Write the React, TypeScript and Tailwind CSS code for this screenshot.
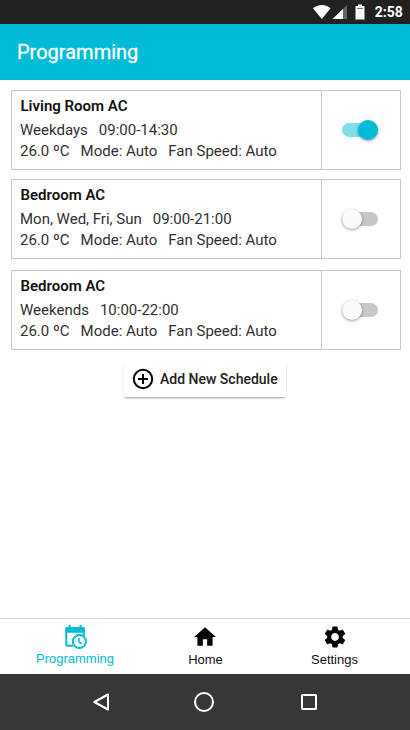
import { MdHome, MdSettings } from "react-icons/md";

type Schedule = {
  name: string;
  days: string;
  hours: string;
  enabled: boolean;
  spacing: string;
};

const schedules: Schedule[] = [
  { name: "Living Room AC", days: "Weekdays", hours: "09:00-14:30", enabled: true, spacing: "mt-[10px]" },
  { name: "Bedroom AC", days: "Mon, Wed, Fri, Sun", hours: "09:00-21:00", enabled: false, spacing: "mt-[9px]" },
  { name: "Bedroom AC", days: "Weekends", hours: "10:00-22:00", enabled: false, spacing: "mt-[11px]" },
];

function StatusBar() {
  return (
    <div className="flex h-6 items-center bg-[#212121] pl-[313px] text-white">
      <svg width="92" height="24" viewBox="0 0 92 24" className="shrink-0">
        <path d="M0 8.200C2.300 6.300 5.200 5 8.800 5s6.500 1.300 8.800 3.200L8.800 19z" fill="#fff" />
        <path d="M34 5V19H19.500z" fill="#fff" fillOpacity=".3" />
        <path d="M30 9V19H19.500z" fill="#fff" />
        <path d="M45 4.500h4v1.500h2.500v13.600h-9V6H45z" fill="#fff" />
        <path d="M44 8h6v1h-6z" fill="#777" />
        <text x="61.800" y="17" fill="#fff" fontSize="14" fontWeight="700" fontFamily="Roboto, sans-serif">2:58</text>
      </svg>
    </div>
  );
}

function Toggle({ on }: { on: boolean }) {
  return (
    <span
      className={`flex h-[14px] w-9 items-center rounded-full ${on ? "justify-end bg-[#80deea]" : "justify-start bg-[#c7c7c7]"}`}
    >
      <span
        className={`size-5 shrink-0 rounded-full shadow-[0_1px_3px_rgba(0,0,0,0.4)] ${on ? "bg-[#00bcd7]" : "bg-[#fafafa]"}`}
      />
    </span>
  );
}

function ScheduleCard({ schedule }: { schedule: Schedule }) {
  return (
    <section className={`ml-[11px] flex h-20 w-[390px] border border-[#c8c8c8] ${schedule.spacing}`}>
      <div className="w-[310px] border-r border-[#c8c8c8] pl-2 pt-[5px] text-[15px] text-[#303030]">
        <h2 className="pl-[0.5px] text-[15px] leading-5 font-semibold text-[#111]">{schedule.name}</h2>
        <p className="mt-1 flex h-5 gap-[11px] leading-5 whitespace-nowrap">
          <span>{schedule.days}</span>
          <span>{schedule.hours}</span>
        </p>
        <p className="mt-px flex h-5 gap-[11px] leading-5 whitespace-nowrap">
          <span>26.0 ºC</span>
          <span>Mode: Auto</span>
          <span>Fan Speed: Auto</span>
        </p>
      </div>
      <div className="flex flex-1 items-center justify-center pr-[2px]">
        <Toggle on={schedule.enabled} />
      </div>
    </section>
  );
}

function AddButton() {
  return (
    <button className="mx-auto mt-[11px] flex h-9 w-[162px] items-center rounded-[2px] bg-white pl-2 text-sm font-medium whitespace-nowrap text-[#212121] shadow-[0_2px_2px_-1px_rgba(0,0,0,0.3),0_1px_2px_rgba(0,0,0,0.12)]">
      <svg width="22" height="22" viewBox="0 0 22 22" fill="none" stroke="#000" strokeWidth="2" className="mr-[6px] shrink-0">
        <circle cx="11" cy="11" r="9.200" />
        <path d="M11 6v10M6 11h10" />
      </svg>
      Add New Schedule
    </button>
  );
}

function CalendarClock() {
  return (
    <svg width="26" height="26" viewBox="-1 0 26 26" fill="none" stroke="#00bcd4" className="ml-[2px]">
      <path d="M9 21.700H3.300A1 1 0 0 1 2.300 20.700V5M19.800 5V12" strokeWidth="2" />
      <path d="M1.300 4.200Q1.300 3 2.500 3H19.600Q20.800 3 20.800 4.200V8.700H1.300z" fill="#00bcd4" stroke="none" />
      <path d="M5.700 1v3M16.600 1v3" strokeWidth="2" />
      <circle cx="15.400" cy="17.500" r="6.500" strokeWidth="2" fill="#fff" />
      <path d="M15 14V18L18 19.800" strokeWidth="1.500" />
    </svg>
  );
}

function BottomTabs() {
  return (
    <nav className="flex h-14 border-t border-[#e0e0e0] bg-white px-[10px] font-['Liberation_Sans',Arial,sans-serif] text-[13px] text-[#111]">
      <div className="flex w-[130px] flex-col items-center pt-[5px] text-[#00bcd4]">
        <CalendarClock />
        <span className="mt-px leading-4">Programming</span>
      </div>
      <div className="flex w-[130px] flex-col items-center pt-[5px]">
        <MdHome size={26} color="#000" />
        <span className="mt-[2px] pl-px leading-4">Home</span>
      </div>
      <div className="flex w-[130px] flex-col items-center pt-[5px]">
        <MdSettings size={26} color="#000" />
        <span className="mt-[2px] pr-px leading-4">Settings</span>
      </div>
    </nav>
  );
}

function SystemBar() {
  return (
    <div className="h-14 bg-[#373737]">
      <svg width="410" height="56" viewBox="0 0 410 56" fill="none" stroke="#fff" strokeWidth="2">
        <path d="M108 20.500V35.500L94.300 28z" strokeLinejoin="round" />
        <circle cx="204" cy="28" r="9" />
        <rect x="302" y="21" width="14" height="14" rx=".5" />
      </svg>
    </div>
  );
}

export default function App() {
  return (
    <div className="flex h-[730px] w-[410px] flex-col overflow-hidden bg-white font-[Roboto,sans-serif]">
      <StatusBar />
      <header className="flex h-14 items-center bg-[#00bcd7] pl-[17px] text-xl text-white">
        <h1 className="[-webkit-text-stroke:0.3px_white]">Programming</h1>
      </header>
      <main className="flex-1">
        {schedules.map((schedule, index) => (
          <ScheduleCard key={index} schedule={schedule} />
        ))}
        <AddButton />
      </main>
      <BottomTabs />
      <SystemBar />
    </div>
  );
}
